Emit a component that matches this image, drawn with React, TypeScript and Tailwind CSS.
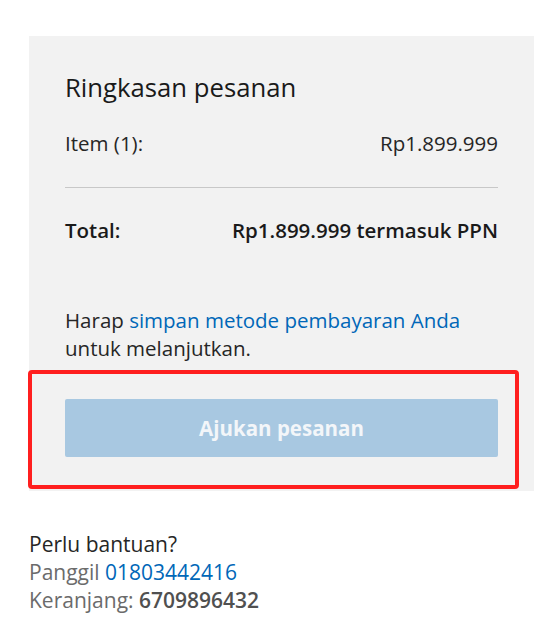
export default function App() {
  return (
    <main
      className="min-h-screen bg-white pl-[29px] pr-[23px] pt-[36px] text-[#262626]"
      style={{ fontFamily: '"Segoe UI", "Open Sans", "Noto Sans", sans-serif' }}
    >
      <section className="bg-[#f2f2f2] px-9 pt-9 pb-[34px]">
        <h2 className="text-[25.7px] leading-8 font-normal text-[#1a1a1a]">Ringkasan pesanan</h2>

        <div className="mt-[25px] flex justify-between text-[20.5px] leading-7">
          <span>Item (1):</span>
          <span>Rp1.899.999</span>
        </div>

        <div className="mt-[30px] border-t border-[#c8c8c8]" />

        <div className="mt-[28px] flex justify-between text-[20.5px] leading-7 font-semibold text-[#1a1a1a]">
          <span>Total:</span>
          <span>Rp1.899.999 termasuk PPN</span>
        </div>

        <p className="mt-[62px] text-[20.5px] leading-7">
          Harap{" "}
          <a href="#" className="text-[#0067b8]">
            simpan metode pembayaran Anda
          </a>{" "}
          untuk melanjutkan.
        </p>

        <div className="relative mt-[37px]">
          <button
            type="button"
            disabled
            className="flex h-[58px] w-full items-center justify-center rounded-[2px] bg-[#a8c8e1] text-[20.5px] font-bold text-[#f3f6f9]"
          >
            Ajukan pesanan
          </button>
          <div className="pointer-events-none absolute -top-[29px] -left-[37px] -right-[21px] -bottom-[32px] rounded-[4px] border-[4px] border-[#ff1f1f]" />
        </div>
      </section>

      <div className="mt-[39px] text-[21px] leading-7">
        <p>Perlu bantuan?</p>
        <p className="text-[#6b6b6b]">
          Panggil <a href="#" className="text-[#0067b8]">01803442416</a>
        </p>
        <p className="text-[#6b6b6b]">
          Keranjang: <span className="font-semibold text-[#505050]">6709896432</span>
        </p>
      </div>
    </main>
  );
}
